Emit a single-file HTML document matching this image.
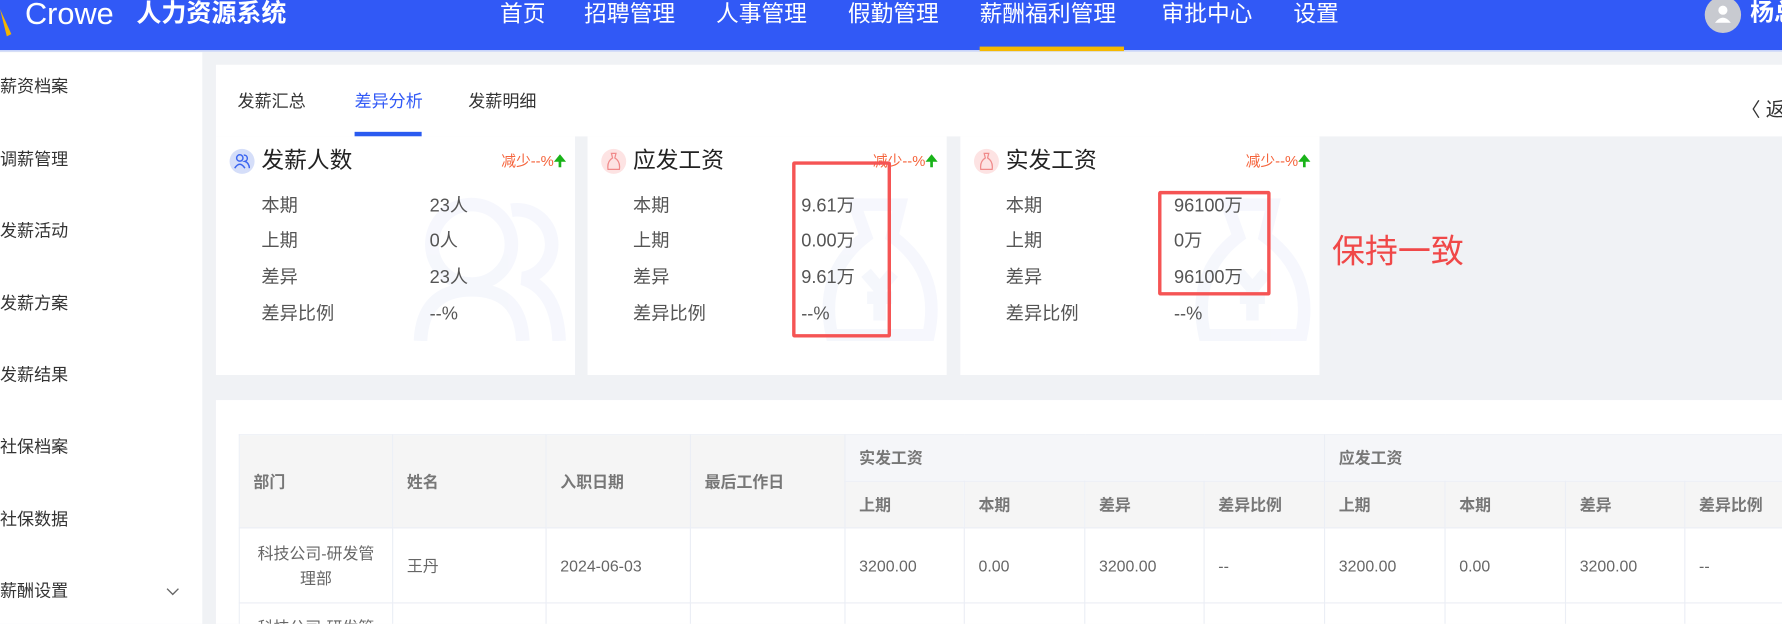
<!DOCTYPE html>
<html><head><meta charset="utf-8"><style>
*{margin:0;padding:0;box-sizing:border-box}
html,body{width:1782px;height:624px;overflow:hidden;background:#f0f2f5}
#w{position:absolute;left:0;top:0;width:1568px;height:549px;transform:scale(1.13648);transform-origin:0 0;font-family:"Liberation Sans","Noto Sans CJK SC",sans-serif;background:#f0f2f5;overflow:hidden}
.a{position:absolute;white-space:nowrap}
.hd{position:absolute;left:0;top:0;width:1568px;height:45px;background:#3159f6;border-bottom:1px solid #c9d4fb}
.nav{position:absolute;top:-2px;color:#fff;font-size:20px;line-height:30px}
.side{position:absolute;left:0;top:46px;width:178px;height:503px;background:#fff}
.si{position:absolute;left:0;font-size:15px;color:#333;line-height:20px}
.card{position:absolute;top:120px;width:316px;height:210px;background:#fff;overflow:hidden}
.ic{position:absolute;left:12px;top:11px;width:22px;height:22px;border-radius:50%}
.tt{position:absolute;left:40px;top:9px;font-size:20px;color:#222;line-height:26px}
.tr{position:absolute;right:8px;top:14px;font-size:13px;color:#f5643c;line-height:16px}
.lb{position:absolute;left:40px;font-size:16px;color:#555;line-height:20px}
.vl{position:absolute;font-size:16px;color:#555;line-height:20px}
.tw{position:absolute;left:210px;top:382px;width:1358px;height:167px;overflow:hidden}
table{border-collapse:collapse;table-layout:fixed;width:1430px;font-size:14px;color:#666}
td,th{border:1px solid #ebeef5;padding:0 12px;text-align:left;vertical-align:middle;overflow:hidden;white-space:nowrap}
th{background:#f5f5f5;font-weight:bold;color:#777;height:41px}
th.g{background:#f5f6f9}
td{height:66px;background:#fff}
.wm{opacity:.55}
</style></head><body><div id="w">
<div class="hd">
 <svg class="a" style="left:0;top:8px" width="12" height="26"><path d="M0 0 L10 22 L6 24 Z" fill="#f4b400"/></svg>
 <div class="a" style="left:22px;top:-4px;color:#fff;font-size:27px;line-height:32px">Crowe</div>
 <div class="a" style="left:120px;top:-3px;color:#fff;font-size:22px;font-weight:bold;line-height:30px">人力资源系统</div>
 <div class="nav" style="left:440px">首页</div>
 <div class="nav" style="left:514px">招聘管理</div>
 <div class="nav" style="left:630px">人事管理</div>
 <div class="nav" style="left:746px">假勤管理</div>
 <div class="nav" style="left:862px">薪酬福利管理</div>
 <div class="a" style="left:862px;top:41px;width:127px;height:4px;background:#f5b800"></div>
 <div class="nav" style="left:1022px">审批中心</div>
 <div class="nav" style="left:1138px">设置</div>
 <div class="a" style="left:1500px;top:-3px;width:32px;height:32px;border-radius:50%;background:#c8cad0"></div>
 <svg class="a" style="left:1508px;top:3px" width="16" height="18"><circle cx="8" cy="6" r="4" fill="#fff"/><path d="M1 17 Q8 8 15 17Z" fill="#fff"/></svg>
 <div class="a" style="left:1540px;top:-3px;color:#fff;font-size:21px;font-weight:bold;line-height:30px">杨总</div>
</div>
<div class="side">
 <div class="si" style="top:21px">薪资档案</div>
 <div class="si" style="top:85px">调薪管理</div>
 <div class="si" style="top:148px">发薪活动</div>
 <div class="si" style="top:212px">发薪方案</div>
 <div class="si" style="top:275px">发薪结果</div>
 <div class="si" style="top:338px">社保档案</div>
 <div class="si" style="top:402px">社保数据</div>
 <div class="si" style="top:465px">薪酬设置</div>
 <svg class="a" style="left:146px;top:471px" width="12" height="8"><path d="M1 1 L6 6 L11 1" stroke="#666" fill="none" stroke-width="1.2"/></svg>
</div>
<div class="a" style="left:190px;top:57px;width:1378px;height:63px;background:#fff"></div>
<div class="a" style="left:209px;top:78px;font-size:15px;color:#333">发薪汇总</div>
<div class="a" style="left:312px;top:78px;font-size:15px;color:#3159f6">差异分析</div>
<div class="a" style="left:312px;top:116px;width:59px;height:4px;background:#2a5bf0"></div>
<div class="a" style="left:412px;top:78px;font-size:15px;color:#333">发薪明细</div>
<div class="a" style="left:1532px;top:82px;font-size:17px;color:#333">〈 返回</div>

<div class="card" style="left:190px">
 <svg class="a wm" style="left:170px;top:50px" width="146" height="130"><g fill="none" stroke="#eef1fb" stroke-width="12"><circle cx="55" cy="45" r="35"/><path d="M10 130 Q12 85 55 85 Q98 85 100 130"/><path d="M90 15 A30 30 0 0 1 100 75 Q130 85 132 130"/></g></svg>
 <div class="ic" style="background:#d5def9"></div>
 <svg class="a" style="left:16px;top:15px" width="14" height="14"><g fill="none" stroke="#3c66f0" stroke-width="1.3"><circle cx="5" cy="4" r="2.8"/><path d="M0.5 13 Q5 6 9.5 13"/><path d="M8.5 1.5 A2.8 2.8 0 0 1 9.5 7 Q13 8 13.5 13"/></g></svg>
 <div class="tt">发薪人数</div>
 <div class="tr">减少--%<span style="color:#19b319;font-weight:bold">🠉</span></div>
 <div class="lb" style="top:52px">本期</div><div class="vl" style="left:188px;top:52px">23人</div>
 <div class="lb" style="top:83px">上期</div><div class="vl" style="left:188px;top:83px">0人</div>
 <div class="lb" style="top:115px">差异</div><div class="vl" style="left:188px;top:115px">23人</div>
 <div class="lb" style="top:147px">差异比例</div><div class="vl" style="left:188px;top:147px">--%</div>
</div>
<div class="card" style="left:517px">
 <svg class="a wm" style="left:200px;top:50px" width="115" height="130"><g fill="none" stroke="#eef1fb" stroke-width="11"><path d="M35 10 L75 10 L68 38 Q112 70 100 125 L15 125 Q3 70 45 38 Z"/><path d="M45 70 L57 84 L69 70 M57 84 L57 112 M46 92 L68 92"/></g></svg>
 <div class="ic" style="background:#fde3e3"></div>
 <svg class="a" style="left:17px;top:14px" width="12" height="16"><path d="M4 1 L8 1 L7 5 Q12 8 11 15 L1 15 Q0 8 5 5 Z" fill="none" stroke="#f08a8a" stroke-width="1.1"/></svg>
 <div class="tt">应发工资</div>
 <div class="tr">减少--%<span style="color:#19b319;font-weight:bold">🠉</span></div>
 <div class="lb" style="top:52px">本期</div><div class="vl" style="left:188px;top:52px">9.61万</div>
 <div class="lb" style="top:83px">上期</div><div class="vl" style="left:188px;top:83px">0.00万</div>
 <div class="lb" style="top:115px">差异</div><div class="vl" style="left:188px;top:115px">9.61万</div>
 <div class="lb" style="top:147px">差异比例</div><div class="vl" style="left:188px;top:147px">--%</div>
</div>
<div class="card" style="left:845px">
 <svg class="a wm" style="left:200px;top:50px" width="115" height="130"><g fill="none" stroke="#eef1fb" stroke-width="11"><path d="M35 10 L75 10 L68 38 Q112 70 100 125 L15 125 Q3 70 45 38 Z"/><path d="M45 70 L57 84 L69 70 M57 84 L57 112 M46 92 L68 92"/></g></svg>
 <div class="ic" style="background:#fde3e3"></div>
 <svg class="a" style="left:17px;top:14px" width="12" height="16"><path d="M4 1 L8 1 L7 5 Q12 8 11 15 L1 15 Q0 8 5 5 Z" fill="none" stroke="#f08a8a" stroke-width="1.1"/></svg>
 <div class="tt">实发工资</div>
 <div class="tr">减少--%<span style="color:#19b319;font-weight:bold">🠉</span></div>
 <div class="lb" style="top:52px">本期</div><div class="vl" style="left:188px;top:52px">96100万</div>
 <div class="lb" style="top:83px">上期</div><div class="vl" style="left:188px;top:83px">0万</div>
 <div class="lb" style="top:115px">差异</div><div class="vl" style="left:188px;top:115px">96100万</div>
 <div class="lb" style="top:147px">差异比例</div><div class="vl" style="left:188px;top:147px">--%</div>
</div>
<div class="a" style="left:697px;top:142px;width:87px;height:155px;border:3px solid #f55454;border-radius:2px"></div>
<div class="a" style="left:1019px;top:168px;width:99px;height:92px;border:3px solid #f55454;border-radius:2px"></div>
<div class="a" style="left:1172px;top:203px;font-size:29px;color:#f04848;line-height:38px">保持一致</div>

<div class="a" style="left:190px;top:352px;width:1378px;height:197px;background:#fff"></div>
<div class="tw">
<table>
<colgroup><col style="width:135px"><col style="width:135px"><col style="width:127px"><col style="width:136px"><col style="width:105px"><col style="width:106px"><col style="width:105px"><col style="width:106px"><col style="width:106px"><col style="width:106px"><col style="width:105px"><col style="width:158px"></colgroup>
<tr><th rowspan="2">部门</th><th rowspan="2">姓名</th><th rowspan="2">入职日期</th><th rowspan="2">最后工作日</th><th colspan="4" class="g">实发工资</th><th colspan="4" class="g">应发工资</th></tr>
<tr><th>上期</th><th>本期</th><th>差异</th><th>差异比例</th><th>上期</th><th>本期</th><th>差异</th><th>差异比例</th></tr>
<tr><td style="text-align:center;line-height:22px;white-space:normal">科技公司-研发管理部</td><td>王丹</td><td>2024-06-03</td><td></td><td>3200.00</td><td>0.00</td><td>3200.00</td><td>--</td><td>3200.00</td><td>0.00</td><td>3200.00</td><td>--</td></tr>
<tr><td style="text-align:center;line-height:22px;vertical-align:top;padding-top:10px">科技公司-研发管</td><td></td><td></td><td></td><td></td><td></td><td></td><td></td><td></td><td></td><td></td><td></td></tr>
</table>
</div>
</div></body></html>
